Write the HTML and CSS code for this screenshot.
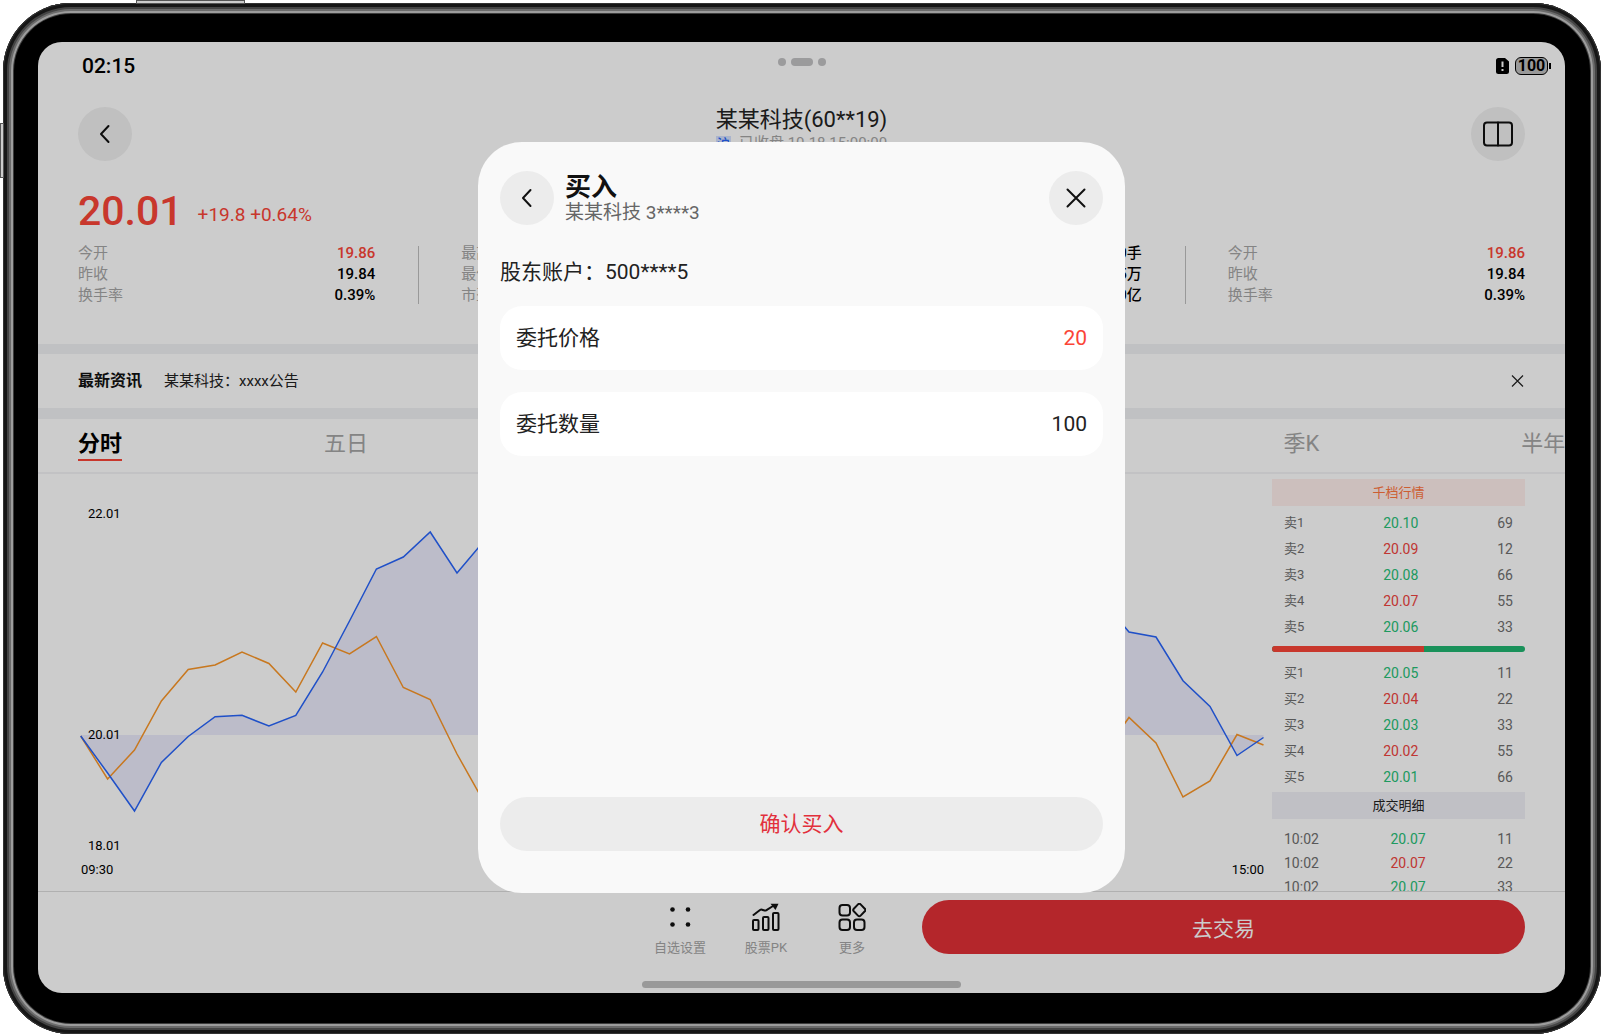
FILE: index.html
```html
<!DOCTYPE html>
<html lang="zh-CN">
<head>
<meta charset="utf-8">
<meta name="viewport" content="width=device-width, initial-scale=1">
<title>某某科技 买入</title>
<link rel="stylesheet" href="styles.css">
</head>
<body>
<div class="device">
  <span class="key key-top"></span>
  <span class="key key-left"></span>
  <div class="screen">
    <div class="status">
      <time class="clock">02:15</time>
      <div class="grabber"><i></i><i class="pill"></i><i></i></div>
      <div class="system">
        <svg width="13" height="16" viewBox="0 0 13 16" aria-hidden="true"><path d="M2.500 0h6.500L13 3.500v10a2.500 2.500 0 0 1-2.500 2.500h-8A2.500 2.500 0 0 1 0 13.500v-11A2.500 2.500 0 0 1 2.500 0z" fill="#000"/><path d="M6.500 3.500v5.500M6.500 11v2" stroke="#fff" stroke-width="2"/></svg>
        <span class="battery">100</span>
      </div>
    </div>

    <header class="topbar">
      <button class="round" aria-label="返回"><svg width="28" height="28" viewBox="0 0 28 28"><path d="M17.500 6L10 14l7.500 8" class="line"/></svg></button>
      <div class="stock">
        <h1>某某科技(60**19)</h1>
        <p><b>沪</b>已收盘 10-18 15:00:00</p>
      </div>
      <button class="round" aria-label="分栏"><svg width="32" height="32" viewBox="0 0 32 32"><rect x="2" y="4.500" width="28" height="23" rx="3" class="line"/><path d="M16 4.500v23" class="line"/></svg></button>
    </header>

    <section class="quote">
      <div class="price"><strong>20.01</strong><span>+19.8 +0.64%</span></div>
      <div class="stats">
        <dl><div><dt>今开</dt><dd class="up">19.86</dd></div><div><dt>昨收</dt><dd>19.84</dd></div><div><dt>换手率</dt><dd>0.39%</dd></div></dl>
        <dl><div><dt>最高</dt><dd class="up">20.10</dd></div><div><dt>最低</dt><dd>19.80</dd></div><div><dt>市盈率</dt><dd>20.25</dd></div></dl>
        <dl><div><dt>成交量</dt><dd>10.20手</dd></div><div><dt>成交额</dt><dd>20.25万</dd></div><div><dt>总市值</dt><dd>300.20亿</dd></div></dl>
        <dl><div><dt>今开</dt><dd class="up">19.86</dd></div><div><dt>昨收</dt><dd>19.84</dd></div><div><dt>换手率</dt><dd>0.39%</dd></div></dl>
      </div>
    </section>

    <section class="news">
      <h2>最新资讯</h2>
      <a href="#news">某某科技：xxxx公告</a>
      <button aria-label="关闭资讯"><svg width="15" height="16" viewBox="0 0 15 16"><path d="M2 2.500l11 11M13 2.500l-11 11" stroke="#222" stroke-width="1.200" fill="none"/></svg></button>
    </section>

    <nav class="tabs">
      <button class="on">分时</button><button>五日</button><button>日K</button><button>周K</button><button>月K</button><button>季K</button><button>半年K</button>
    </nav>

    <main class="market">
      <div class="chart">
        <svg viewBox="0 0 1186 417" preserveAspectRatio="none" aria-hidden="true">
          <path class="area" d="M2.700 261L2.700 262 29.600 299 56.500 337 83.400 288.500 110.200 262.500 137.100 242.700 164 241.300 190.900 252 217.800 241.500 244.600 198 271.500 147 298.400 95 325.300 83 352.200 58 379 99 406 67 486 80 593 60 700 90 808 70 916 110 1024 126 1051 158 1078 163 1105 206.700 1132 232.500 1159 281.500 1185.500 263.500V261z"/>
          <path class="avg" d="M2.700 262L29.600 305 56.500 276 83.400 227 110.200 195.500 137.100 191 164 178 190.900 189.500 217.800 218 244.600 169 271.500 180 298.400 162.500 325.300 213.500 352.200 225.500 379 280 406 328 486 340 593 310 700 330 808 300 916 320 1024 281 1051 243.500 1078 269 1105 323 1132 307 1159 260.500 1185.500 271"/>
          <path class="now" d="M2.700 262L29.600 299 56.500 337 83.400 288.500 110.200 262.500 137.100 242.700 164 241.300 190.900 252 217.800 241.500 244.600 198 271.500 147 298.400 95 325.300 83 352.200 58 379 99 406 67 486 80 593 60 700 90 808 70 916 110 1024 126 1051 158 1078 163 1105 206.700 1132 232.500 1159 281.500 1185.500 263.500"/>
        </svg>
        <div class="scale"><span>22.01</span><span>20.01</span><span>18.01</span></div>
        <div class="hours"><time>09:30</time><time>15:00</time></div>
      </div>
      <aside class="book">
        <table>
          <caption class="depth">千档行情</caption>
          <tbody>
            <tr><th>卖1</th><td class="green">20.10</td><td>69</td></tr>
            <tr><th>卖2</th><td class="red">20.09</td><td>12</td></tr>
            <tr><th>卖3</th><td class="green">20.08</td><td>66</td></tr>
            <tr><th>卖4</th><td class="red">20.07</td><td>55</td></tr>
            <tr><th>卖5</th><td class="green">20.06</td><td>33</td></tr>
          </tbody>
        </table>
        <div class="ratio"><span style="width:60%"></span></div>
        <table>
          <tbody>
            <tr><th>买1</th><td class="green">20.05</td><td>11</td></tr>
            <tr><th>买2</th><td class="red">20.04</td><td>22</td></tr>
            <tr><th>买3</th><td class="green">20.03</td><td>33</td></tr>
            <tr><th>买4</th><td class="red">20.02</td><td>55</td></tr>
            <tr><th>买5</th><td class="green">20.01</td><td>66</td></tr>
          </tbody>
        </table>
        <table class="trades">
          <caption>成交明细</caption>
          <tbody>
            <tr><th>10:02</th><td class="green">20.07</td><td>11</td></tr>
            <tr><th>10:02</th><td class="red">20.07</td><td>22</td></tr>
            <tr><th>10:02</th><td class="green">20.07</td><td>33</td></tr>
          </tbody>
        </table>
      </aside>
    </main>

    <footer class="actions">
      <div class="bar">
        <button class="tool"><svg width="28" height="28" viewBox="0 0 28 28"><g fill="#111"><circle cx="6.500" cy="6.500" r="2.300"/><circle cx="22" cy="6.500" r="2.300"/><circle cx="6.500" cy="21.500" r="2.300"/><circle cx="22" cy="21.500" r="2.300"/></g></svg>自选设置</button>
        <button class="tool"><svg width="28" height="28" viewBox="0 0 28 28"><g fill="none" stroke="#111" stroke-width="2" stroke-linejoin="round" stroke-linecap="round"><rect x="1" y="17" width="5.500" height="10" rx="1"/><rect x="11" y="14" width="5.500" height="13" rx="1"/><rect x="21" y="10" width="5.500" height="17" rx="1"/><path d="M1.500 12l6.500-5q1-.6 2-.3l2.500.8q1 .2 2-.4L21 3"/></g><path d="M18.500.8h8L23.500 7z" fill="#111"/></svg>股票PK</button>
        <button class="tool"><svg width="28" height="28" viewBox="0 0 28 28"><g fill="none" stroke="#111" stroke-width="2"><rect x="1.500" y="2" width="10.500" height="10.500" rx="3"/><rect x="1.500" y="16.500" width="10.500" height="10.500" rx="3"/><rect x="16" y="16.500" width="10.500" height="10.500" rx="3"/><path d="M20 1.400q1.300-1.300 2.600 0l4.200 4.300q1.200 1.300 0 2.600l-4.200 4.300q-1.300 1.300-2.600 0l-4.200-4.300q-1.200-1.300 0-2.600z"/></g></svg>更多</button>
        <button class="trade">去交易</button>
      </div>
      <div class="home"></div>
    </footer>

    <div class="scrim">
      <form class="dialog" role="dialog" aria-labelledby="buy-title">
        <div class="head">
          <button type="button" class="round" aria-label="返回"><svg width="28" height="28" viewBox="0 0 28 28"><path d="M17.500 6L10 14l7.500 8" class="line"/></svg></button>
          <div class="titles"><h2 id="buy-title">买入</h2><p>某某科技 3****3</p></div>
          <button type="button" class="round" aria-label="关闭"><svg width="28" height="28" viewBox="0 0 28 28"><path d="M5.500 5.500l17 17M22.500 5.500l-17 17" class="line"/></svg></button>
        </div>
        <p class="account">股东账户：500****5</p>
        <div class="field"><label for="cost">委托价格</label><input id="cost" class="cost" value="20"></div>
        <div class="field"><label for="amount">委托数量</label><input id="amount" value="100"></div>
        <button type="button" class="confirm">确认买入</button>
      </form>
    </div>
  </div>
</div>
</body>
</html>
```
FILE: styles.css
```css
* { box-sizing: border-box; }
body, h1, h2, p, dl, dd { margin: 0; }
body {
  height: 100vh;
  padding: 3px 1px 1px 3px;
  background: #fff;
  color: #000;
  font-family: Roboto, "Noto Sans CJK SC", sans-serif;
  font-size: 15px;
}
button, input { font: inherit; color: inherit; border: 0; background: none; padding: 0; }
button { cursor: pointer; }
svg { display: block; }
.line { fill: none; stroke: #111; stroke-width: 2; stroke-linecap: round; stroke-linejoin: round; }

/* tablet body */
.device {
  position: relative;
  height: 100%;
  padding: 39px 36px 41px 35px;
  border-radius: 68px;
  background: #000;
  box-shadow:
    inset 0 0 0 1px #333,
    inset 0 0 0 4px #161616,
    inset 0 0 0 6px #444,
    inset 0 0 0 8px #6b6b6b,
    inset 0 0 0 10px #9c9c9c,
    inset 0 0 0 11px #3c3c3c;
}
.key { position: absolute; background: #ccc; border: 1px solid #555; }
.key-top { top: -3px; left: 133px; width: 109px; height: 4px; }
.key-left { top: 120px; left: -3px; width: 4px; height: 55px; }

.screen {
  position: relative;
  height: 100%;
  display: flex;
  flex-direction: column;
  overflow: hidden;
  border-radius: 24px;
  background: #fff;
}

/* status bar */
.status {
  display: grid;
  grid-template-columns: 1fr auto 1fr;
  height: 48px;
  padding: 0 14px;
  align-items: center;
}
.clock { padding-left: 30px; font-size: 21px; font-weight: 500; line-height: 24px; }
.grabber { display: flex; gap: 5px; padding-bottom: 8px; }
.grabber i { width: 8px; height: 8px; border-radius: 4px; background: #c2c2c4; }
.grabber .pill { width: 22px; }
.system { display: flex; justify-content: flex-end; align-items: center; gap: 6px; }
.battery {
  position: relative;
  width: 33px;
  margin-right: 3px;
  border: 1px solid #000;
  border-radius: 6px;
  background: #c0c0c0;
  font-size: 16px;
  font-weight: 700;
  line-height: 16px;
  text-align: center;
}
.battery::after {
  content: "";
  position: absolute;
  right: -4px;
  top: 5px;
  width: 2px;
  height: 6px;
  background: #000;
}

/* title bar */
.topbar {
  display: flex;
  justify-content: space-between;
  margin-top: 17px;
  padding: 0 40px;
}
.round {
  display: grid;
  place-items: center;
  flex: none;
  width: 54px;
  height: 54px;
  border-radius: 50%;
  background: #f1f1f1;
}
.stock { text-align: center; }
.stock h1 { font-size: 22px; font-weight: 400; line-height: 26px; color: #222; }
.stock p {
  display: flex;
  justify-content: center;
  align-items: center;
  gap: 8px;
  font-size: 15px;
  line-height: 21px;
  color: #a6a6a6;
}
.stock b { padding: 0 1px; font-size: 13px; line-height: 16px; font-weight: 500; color: #2764fa; background: #d5e2ff; }

/* quote */
.quote { padding: 26px 40px 38px; }
.price { display: flex; align-items: flex-end; gap: 15px; color: #fb4537; }
.price strong { font-size: 41px; font-weight: 500; line-height: 48px; }
.price span { font-size: 19px; line-height: 40px; }
.stats {
  display: grid;
  grid-template-columns: repeat(4, 1fr);
  gap: 86px;
  margin-top: 8px;
}
.stats dl { position: relative; line-height: 21px; }
.stats dl div { display: flex; justify-content: space-between; }
.stats dl + dl::before {
  content: "";
  position: absolute;
  left: -43px;
  top: 3px;
  width: 1px;
  height: 58px;
  background: #c0c0c0;
}
.stats dt { color: #a6a6a6; }
.stats dd { font-weight: 500; }
.up { color: #fb4537; }

/* news strip */
.news {
  display: flex;
  align-items: center;
  height: 75px;
  padding: 0 40px;
  border: solid #f1f2f4;
  border-width: 10px 0 11px;
  line-height: 20px;
}
.news h2 { font-size: 16px; font-weight: 700; color: #111; }
.news a { margin-left: 22px; color: #222; text-decoration: none; }
.news button { margin-left: auto; }

/* period tabs */
.tabs {
  display: flex;
  gap: 202px;
  flex: none;
  padding: 10px 40px 11px;
  border-bottom: 2px solid #f3f3f5;
  overflow: hidden;
}
.tabs button {
  flex: none;
  border-bottom: 2px solid transparent;
  font-size: 22px;
  line-height: 30px;
  color: #a6a6a6;
}
.tabs .on { border-color: #fb4537; color: #000; font-weight: 700; }

/* chart and order book */
.market {
  display: grid;
  grid-template-columns: 1fr 253px;
  gap: 8px;
  flex: 1;
  min-height: 0;
  padding: 0 40px;
  overflow: hidden;
}
.chart { position: relative; min-height: 0; font-size: 13px; line-height: 16px; }
.chart svg { width: 100%; height: 100%; }
.area { fill: #ebebfc; }
.avg { fill: none; stroke: #fa9627; stroke-width: 1.500; }
.now { fill: none; stroke: #2764fa; stroke-width: 1.500; }
.scale {
  position: absolute;
  left: 10px;
  top: 32px;
  bottom: 37px;
  display: grid;
  grid-template-rows: 2fr 1fr 16px;
}
.hours {
  position: absolute;
  left: 3px;
  right: 0;
  bottom: 13px;
  display: flex;
  justify-content: space-between;
}
.book { padding-top: 5px; height: 0; color: #6f6f6f; font-size: 14px; }
.book table { display: block; padding-bottom: 6px; }
.book caption, .book tbody { display: block; }
.book caption { margin-bottom: 4px; line-height: 27px; font-size: 13px; background: #f1f1f7; color: #222; }
.book .depth { background: #ffefed; color: #ff763f; }
.book tr { display: flex; justify-content: space-between; padding: 0 12px; line-height: 26px; }
.book th { font-weight: 400; font-size: 13px; padding: 0; }
.book td { padding: 0; }
.book .green { color: #27c177; }
.book .red { color: #f04440; }
.ratio { height: 6px; margin-bottom: 8px; border-radius: 3px; overflow: hidden; background: #20b671; }
.ratio span { display: block; height: 100%; background: #fb4537; }
.book .ratio + table { padding-bottom: 2px; }
.book .trades caption { margin-bottom: 8px; }
.book .trades tr { line-height: 24px; }
.book .trades th { font-size: 14px; }

/* bottom actions */
.actions { flex: none; padding: 8px 40px 5px; border-top: 1px solid #dcdcdc; }
.bar { display: flex; justify-content: flex-end; }
.tool {
  display: flex;
  flex-direction: column;
  align-items: center;
  gap: 9px;
  width: 86px;
  padding-top: 3px;
  font-size: 13px;
  line-height: 16px;
  color: #a6a6a6;
}
.trade {
  flex: 0 1 603px;
  height: 54px;
  margin-left: 27px;
  border-radius: 27px;
  background: #e23036;
  color: #fff;
  font-size: 21px;
}
.home { width: 319px; height: 7px; margin: 25px auto 0; border-radius: 4px; background: #c0c0c0; }

/* buy dialog */
.scrim {
  position: absolute;
  inset: 0;
  display: grid;
  place-items: center;
  background: rgba(0, 0, 0, 0.2);
}
.dialog {
  display: flex;
  flex-direction: column;
  width: min(647px, 92%);
  height: 79%;
  padding: 29px 22px 42px;
  border-radius: 44px;
  background: #f9f9f9;
  font-size: 21px;
  color: #222;
}
.dialog .round { background: #ececec; }
.head { display: flex; align-items: center; }
.titles { flex: 1; margin-left: 11px; }
.titles h2 { font-size: 26px; line-height: 30px; color: #111; }
.titles p { font-size: 19px; line-height: 22px; color: #666; }
.account { margin: 32px 0 19px; line-height: 30px; }
.field {
  display: flex;
  align-items: center;
  justify-content: space-between;
  height: 64px;
  margin-bottom: 22px;
  padding: 0 16px;
  border-radius: 22px;
  background: #fff;
  line-height: 30px;
}
.field input { width: 160px; text-align: right; }
.field .cost { color: #fb4537; }
.confirm { height: 54px; margin-top: auto; border-radius: 27px; background: #ececec; color: #e2303c; line-height: 30px; }
```
